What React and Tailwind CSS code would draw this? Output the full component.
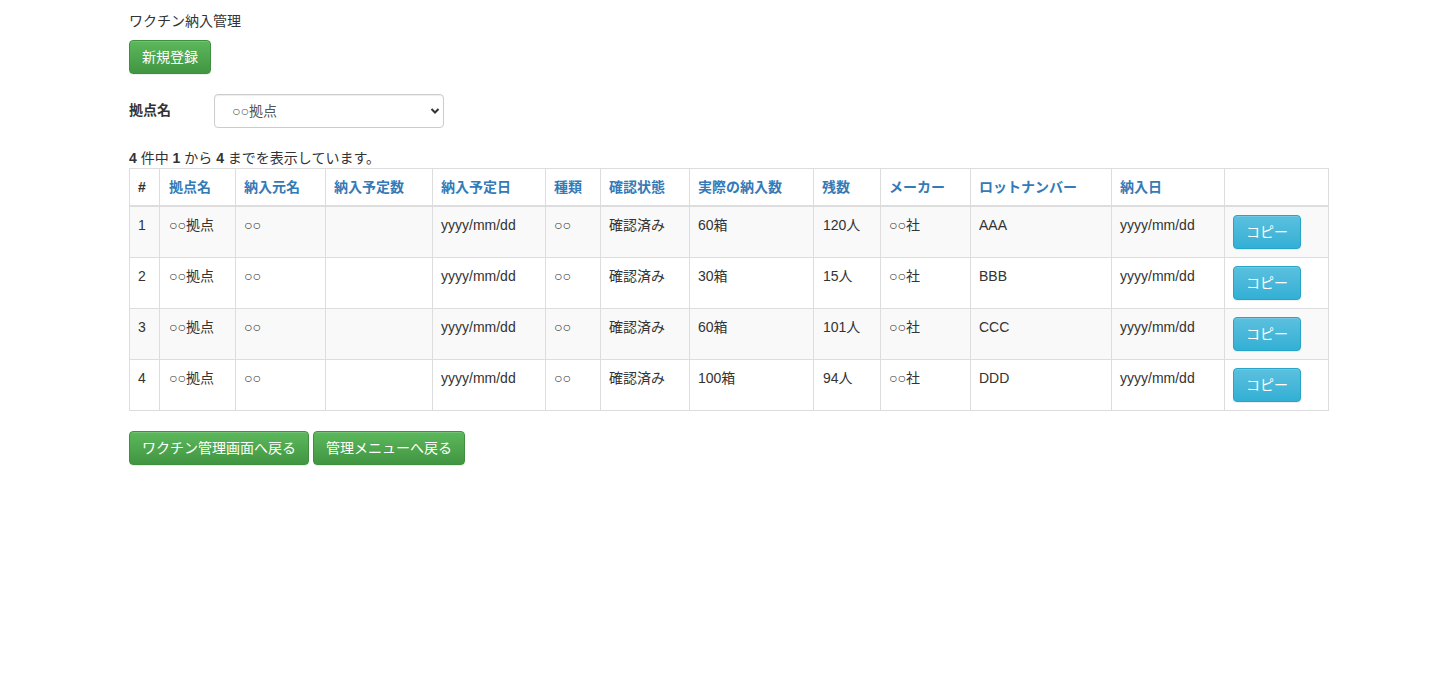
import React from "react";

const rows = [
  { no: 1, actual: "60箱", rest: "120人", lot: "AAA" },
  { no: 2, actual: "30箱", rest: "15人", lot: "BBB" },
  { no: 3, actual: "60箱", rest: "101人", lot: "CCC" },
  { no: 4, actual: "100箱", rest: "94人", lot: "DDD" },
];

const heads = [
  ["拠点名", "w-[76px] pl-[9px]"],
  ["納入元名", "w-[90px] pl-2"],
  ["納入予定数", "w-[107px] pl-2"],
  ["納入予定日", "w-[113px] pl-2"],
  ["種類", "w-[55px] pl-2"],
  ["確認状態", "w-[89px] pl-2"],
  ["実際の納入数", "w-[124px] pl-2"],
  ["残数", "w-[67px] pl-2"],
  ["メーカー", "w-[90px] pl-2"],
  ["ロットナンバー", "w-[141px] pl-2"],
  ["納入日", "w-[113px] pl-2"],
];

const greenBtn =
  "h-[34px] px-3 rounded border border-[#3e8f3e] bg-gradient-to-b from-[#5cb85c] to-[#419641] text-white text-[14px] leading-[20px] shadow-[inset_0_1px_0_rgba(255,255,255,0.15),0_1px_1px_rgba(0,0,0,0.075)]";

function App() {
  return (
    <div
      className="min-h-screen bg-white text-[#333] text-[14px] leading-[20px]"
      style={{ fontFamily: '"Liberation Sans", "Noto Sans CJK JP", sans-serif' }}
    >
      <div className="w-[1200px] ml-[129px] pt-[11px]">
        <div className="h-[20px]">ワクチン納入管理</div>
        <button className={`${greenBtn} mt-[9px]`}>新規登録</button>

        <div className="flex items-center mt-[20px] h-[34px]">
          <label className="w-[85px] font-bold -mt-[3px]">拠点名</label>
          <div className="relative w-[230px]">
            <select className="appearance-none w-full h-[34px] pl-[17px] pr-8 border border-[#ccc] rounded bg-white text-[#555] shadow-[inset_0_1px_1px_rgba(0,0,0,0.075)]">
              <option>○○拠点</option>
            </select>
            <svg
              className="absolute right-[4px] top-[13px] pointer-events-none"
              width="10"
              height="8"
              viewBox="0 0 10 8"
            >
              <path d="M1.5 2 L5 5.5 L8.5 2" stroke="#333" strokeWidth="2" fill="none" />
            </svg>
          </div>
        </div>

        <div className="mt-[20px] h-[20px] leading-[20px]">
          <b>4</b> 件中 <b>1</b> から <b>4</b> までを表示しています。
        </div>

        <table className="w-[1200px] border-collapse border border-[#ddd] table-fixed">
          <thead>
            <tr>
              <th className="w-[30px] border border-[#ddd] border-b-2 px-2 py-2 text-left font-bold">#</th>
              {heads.map(([h, w]) => (
                <th
                  key={h}
                  className={`${w} border border-[#ddd] border-b-2 pr-2 py-2 text-left font-bold text-[#337ab7]`}
                >
                  {h}
                </th>
              ))}
              <th className="border border-[#ddd] border-b-2 px-2 py-2"></th>
            </tr>
          </thead>
          <tbody>
            {rows.map((r) => (
              <tr key={r.no} className={r.no % 2 === 1 ? "bg-[#f9f9f9]" : "bg-white"}>
                <td className="border border-[#ddd] px-2 py-2 align-top">{r.no}</td>
                <td className="border border-[#ddd] pl-[9px] pr-2 py-2 align-top">○○拠点</td>
                <td className="border border-[#ddd] px-2 py-2 align-top">○○</td>
                <td className="border border-[#ddd] px-2 py-2 align-top"></td>
                <td className="border border-[#ddd] px-2 py-2 align-top">yyyy/mm/dd</td>
                <td className="border border-[#ddd] px-2 py-2 align-top">○○</td>
                <td className="border border-[#ddd] px-2 py-2 align-top">確認済み</td>
                <td className="border border-[#ddd] px-2 py-2 align-top">{r.actual}</td>
                <td className="border border-[#ddd] pl-[9px] pr-2 py-2 align-top">{r.rest}</td>
                <td className="border border-[#ddd] px-2 py-2 align-top">○○社</td>
                <td className="border border-[#ddd] px-2 py-2 align-top">{r.lot}</td>
                <td className="border border-[#ddd] px-2 py-2 align-top">yyyy/mm/dd</td>
                <td className="border border-[#ddd] px-2 py-2 align-top">
                  <button className="block h-[34px] w-[68px] rounded border border-[#28a4c9] bg-gradient-to-b from-[#5bc0de] to-[#31b0d5] text-white shadow-[inset_0_1px_0_rgba(255,255,255,0.15),0_1px_1px_rgba(0,0,0,0.075)]">
                    コピー
                  </button>
                </td>
              </tr>
            ))}
          </tbody>
        </table>

        <div className="flex gap-[4px] mt-[20px]">
          <button className={greenBtn}>ワクチン管理画面へ戻る</button>
          <button className={greenBtn}>管理メニューへ戻る</button>
        </div>
      </div>
    </div>
  );
}

export default App;
